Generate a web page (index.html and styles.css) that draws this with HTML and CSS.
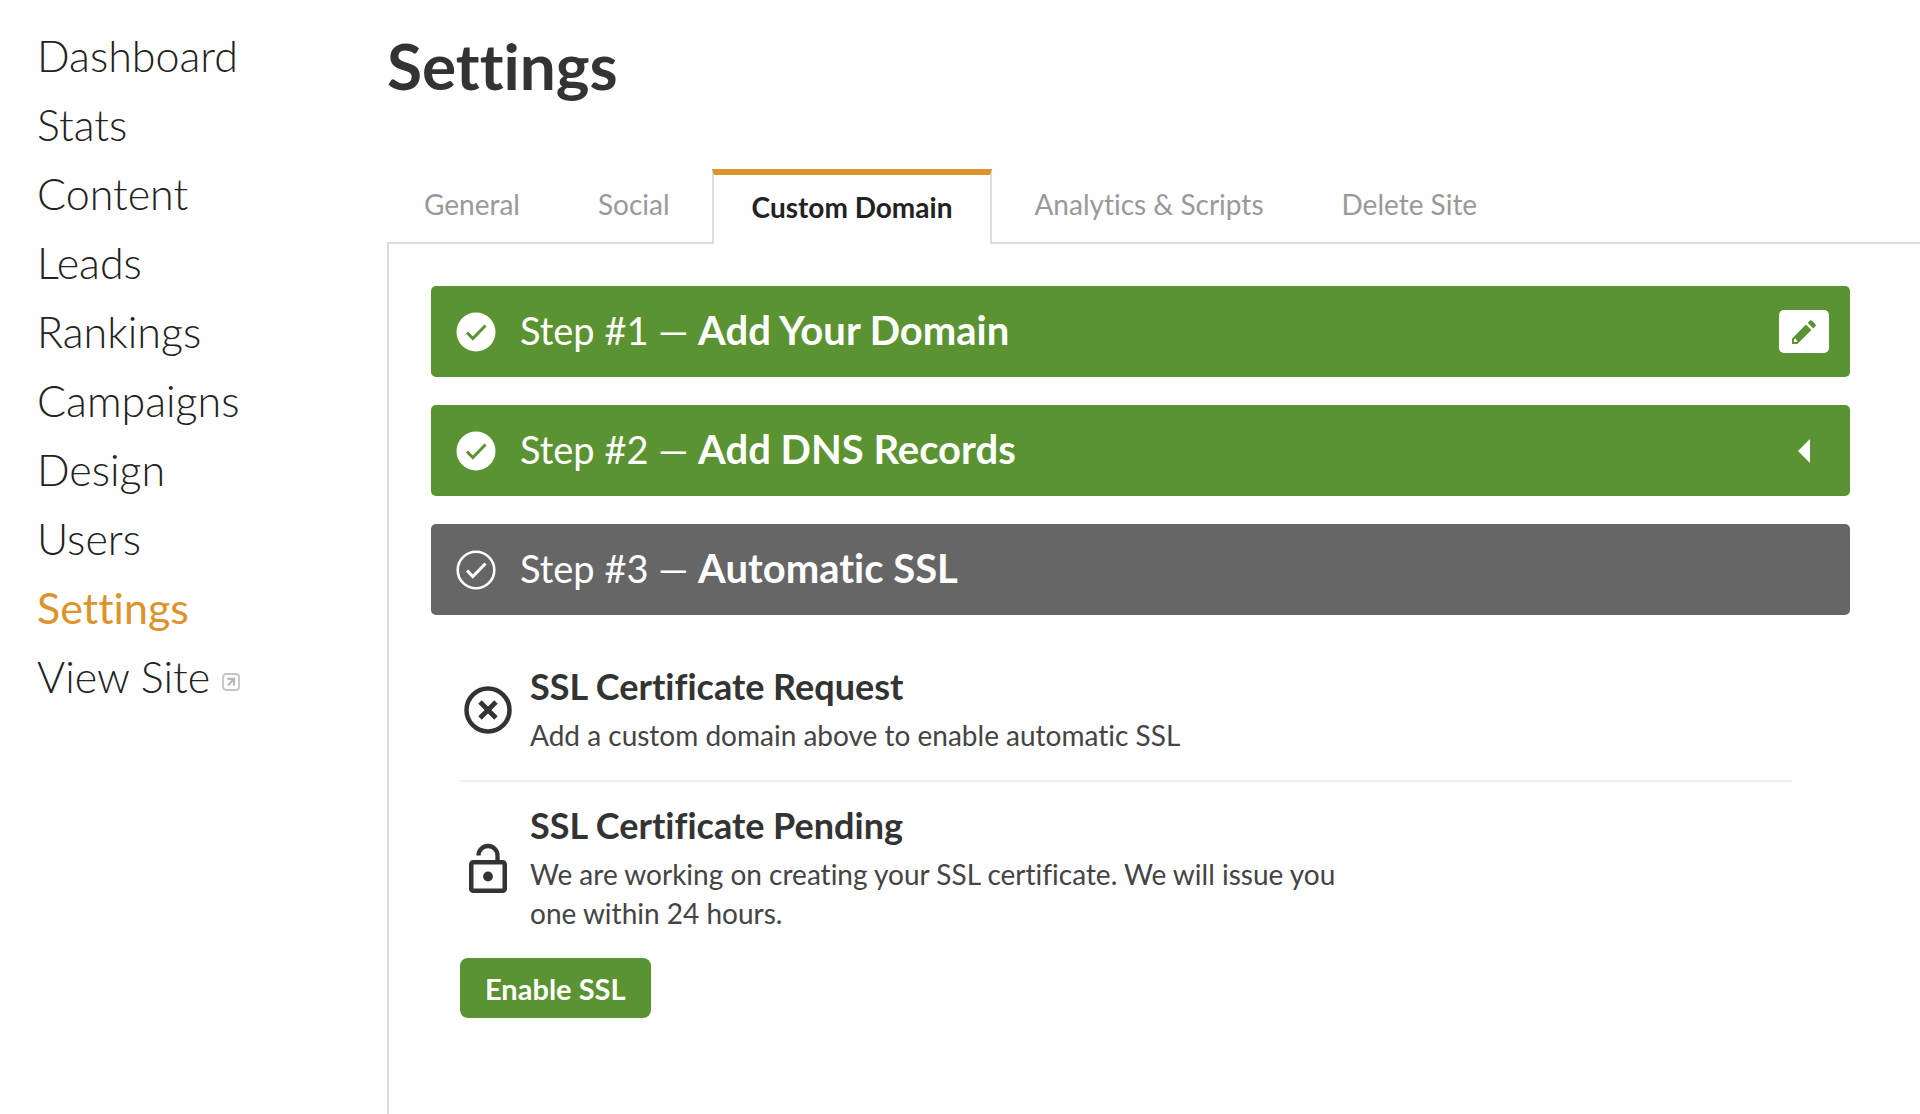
FILE: index.html
```html
<!DOCTYPE html>
<html lang="en">
<head>
  <meta charset="utf-8">
  <meta name="viewport" content="width=device-width, initial-scale=1">
  <title>Settings</title>
  <link rel="stylesheet" href="styles.css">
</head>
<body>
  <div class="layout">
    <nav class="sidebar" aria-label="Main">
      <a class="nav-link" href="#">Dashboard</a>
      <a class="nav-link" href="#">Stats</a>
      <a class="nav-link" href="#">Content</a>
      <a class="nav-link" href="#">Leads</a>
      <a class="nav-link" href="#">Rankings</a>
      <a class="nav-link" href="#">Campaigns</a>
      <a class="nav-link" href="#">Design</a>
      <a class="nav-link" href="#">Users</a>
      <a class="nav-link nav-link-active" href="#" aria-current="page">Settings</a>
      <a class="nav-link" href="#">View Site
        <svg class="external-icon" viewBox="0 0 18 18" aria-hidden="true"><rect x="1" y="1" width="16" height="16" rx="3" fill="none" stroke="#c4c4c4" stroke-width="1.800"/><path d="M5.500 5.900H12v6.500M12 6l-6 6.300" fill="none" stroke="#b8b8b8" stroke-width="2.200"/></svg>
      </a>
    </nav>

    <main class="main">
      <h1 class="page-title">Settings</h1>

      <nav class="tabs" aria-label="Settings sections">
        <a class="tab" href="#">General</a>
        <a class="tab" href="#">Social</a>
        <a class="tab tab-active" href="#" aria-current="page">Custom Domain</a>
        <a class="tab" href="#">Analytics &amp; Scripts</a>
        <a class="tab" href="#">Delete Site</a>
      </nav>

      <section class="panel">
        <div class="step">
          <svg class="step-icon" viewBox="0 0 40 40" aria-hidden="true"><circle cx="20" cy="20" r="19.500" fill="#fff"/><path d="M11 20.500l5.800 6L29.500 13.500" fill="none" stroke="#5c9332" stroke-width="3"/></svg>
          <h2 class="step-title">Step #1 — <strong>Add Your Domain</strong></h2>
          <button class="edit-button" type="button" aria-label="Edit domain">
            <svg class="edit-icon" viewBox="0 0 26 26" aria-hidden="true"><path fill="#5c9332" fill-rule="evenodd" d="M1 19.500L15 5.500l5.400 5.400L6.400 25H1zM3 20.500V23h2.600l1.200-1.200-1.300-.2-.3-1.700-1-.6zM16.700 3.800l2-2q1.200-1.200 2.400 0l3.200 3.200q1.200 1.200 0 2.400l-2 2z"/></svg>
          </button>
        </div>
        <div class="step">
          <svg class="step-icon" viewBox="0 0 40 40" aria-hidden="true"><circle cx="20" cy="20" r="19.500" fill="#fff"/><path d="M11 20.500l5.800 6L29.500 13.500" fill="none" stroke="#5c9332" stroke-width="3"/></svg>
          <h2 class="step-title">Step #2 — <strong>Add DNS Records</strong></h2>
          <button class="expand-button" type="button" aria-label="Expand DNS records">
            <svg class="expand-icon" viewBox="0 0 12 24" aria-hidden="true"><path fill="#fff" d="M12 0v24L0 12z"/></svg>
          </button>
        </div>
        <div class="step step-current">
          <svg class="step-icon" viewBox="0 0 40 40" aria-hidden="true"><circle cx="20" cy="20" r="18.300" fill="none" stroke="#fff" stroke-width="2.600"/><path d="M11 20.500l5.800 6L29.500 13.500" fill="none" stroke="#fff" stroke-width="3"/></svg>
          <h2 class="step-title">Step #3 — <strong>Automatic SSL</strong></h2>
        </div>

        <div class="details">
          <div class="status">
            <svg class="status-icon" viewBox="0 0 56 56" aria-hidden="true"><circle cx="28" cy="28" r="21.500" fill="none" stroke="#333" stroke-width="4.500"/><path d="M20 20l16 16M36 20L20 36" fill="none" stroke="#333" stroke-width="4.800"/></svg>
            <div class="status-text">
              <h3 class="status-title">SSL Certificate Request</h3>
              <p class="status-copy">Add a custom domain above to enable automatic SSL</p>
            </div>
          </div>
          <div class="status">
            <svg class="status-icon" viewBox="0 0 56 56" aria-hidden="true"><rect x="11.250" y="22.250" width="33.500" height="28.500" rx="2" fill="none" stroke="#333" stroke-width="4.500"/><circle cx="28" cy="36.500" r="4.900" fill="#333"/><path d="M18.500 15.500a9.500 9.500 0 0 1 19 0V22" fill="none" stroke="#333" stroke-width="4.300"/></svg>
            <div class="status-text">
              <h3 class="status-title">SSL Certificate Pending</h3>
              <p class="status-copy">We are working on creating your SSL certificate. We will issue you one within 24 hours.</p>
            </div>
          </div>
          <button class="enable-button" type="button">Enable SSL</button>
        </div>
      </section>
    </main>
  </div>
</body>
</html>
```
FILE: styles.css
```css
* {
  box-sizing: border-box;
}

body {
  margin: 0;
  background: #fefefe;
  color: #333;
  font-family: Lato, "Open Sans", sans-serif;
  font-variant-ligatures: none;
}

h1, h2, h3, p {
  margin: 0;
}

a {
  text-decoration: none;
}

.layout {
  display: grid;
  grid-template-columns: 387px 1fr;
  min-height: 100vh;
}

.sidebar {
  display: flex;
  flex-direction: column;
  padding: 21px 37px;
}

.nav-link {
  color: #222;
  font-size: 43px;
  font-weight: 300;
  line-height: 69px;
  white-space: nowrap;
}

.nav-link-active {
  color: #db942c;
  font-weight: 400;
}

.external-icon {
  width: 18px;
  height: 18px;
  margin-bottom: 2px;
}

.main {
  display: flex;
  flex-direction: column;
}

.page-title {
  padding-top: 30px;
  font-size: 64px;
  font-weight: 700;
  line-height: 72px;
}

.tabs {
  display: flex;
  align-items: flex-end;
  gap: 6px;
  margin-top: 67px;
}

.tab {
  height: 72px;
  padding: 0 36px;
  color: #999;
  font-size: 28px;
  line-height: 68px;
  white-space: nowrap;
}

.tab:first-child {
  padding-left: 37px;
}

/* Stacked above the panel so that it hides the border beneath it */
.tab-active {
  position: relative;
  height: 75px;
  margin-bottom: -2px;
  padding: 0 38px;
  border: 2px solid #dcdcdc;
  border-top: 6px solid #db942c;
  border-bottom: 0;
  background: #fefefe;
  color: #222;
  font-weight: 700;
  line-height: 65px;
}

.panel {
  display: flex;
  flex: 1;
  flex-direction: column;
  gap: 28px;
  padding: 42px 70px 42px 42px;
  border-top: 2px solid #dcdcdc;
  border-left: 2px solid #dcdcdc;
}

.step {
  display: flex;
  align-items: center;
  gap: 24px;
  height: 91px;
  padding: 0 21px 0 25px;
  border-radius: 5px;
  background: #5c9332;
  color: #fff;
}

.step-current {
  background: #666;
}

.step-icon {
  width: 40px;
  height: 40px;
}

.step-title {
  flex: 1;
  padding-bottom: 3px;
  font-size: 38px;
  font-weight: 400;
  line-height: 48px;
}

.step-title strong {
  font-size: 40px;
}

.edit-button,
.expand-button {
  display: flex;
  align-items: center;
  justify-content: center;
  width: 50px;
  height: 43px;
  padding: 0;
  border: 0;
  border-radius: 5px;
  background: #fff;
}

.expand-button {
  background: transparent;
}

.edit-icon {
  width: 26px;
  height: 26px;
}

.expand-icon {
  width: 12px;
  height: 24px;
}

.details {
  padding: 0 58px 0 29px;
}

.status {
  display: flex;
  align-items: center;
  gap: 14px;
  padding: 21px 0 25px;
}

.status + .status {
  border-top: 2px solid #efefef;
}

.status-icon {
  width: 56px;
  height: 56px;
}

.status-text {
  max-width: 830px;
}

.status-title {
  font-size: 36px;
  font-weight: 700;
  line-height: 44px;
}

.status-copy {
  padding-top: 8px;
  color: #444;
  font-size: 28px;
  line-height: 39px;
}

.enable-button {
  height: 60px;
  padding: 0 25px;
  border: 0;
  border-radius: 8px;
  background: #5c9332;
  color: #fff;
  font: 700 29px Lato, "Open Sans", sans-serif;
}
```
